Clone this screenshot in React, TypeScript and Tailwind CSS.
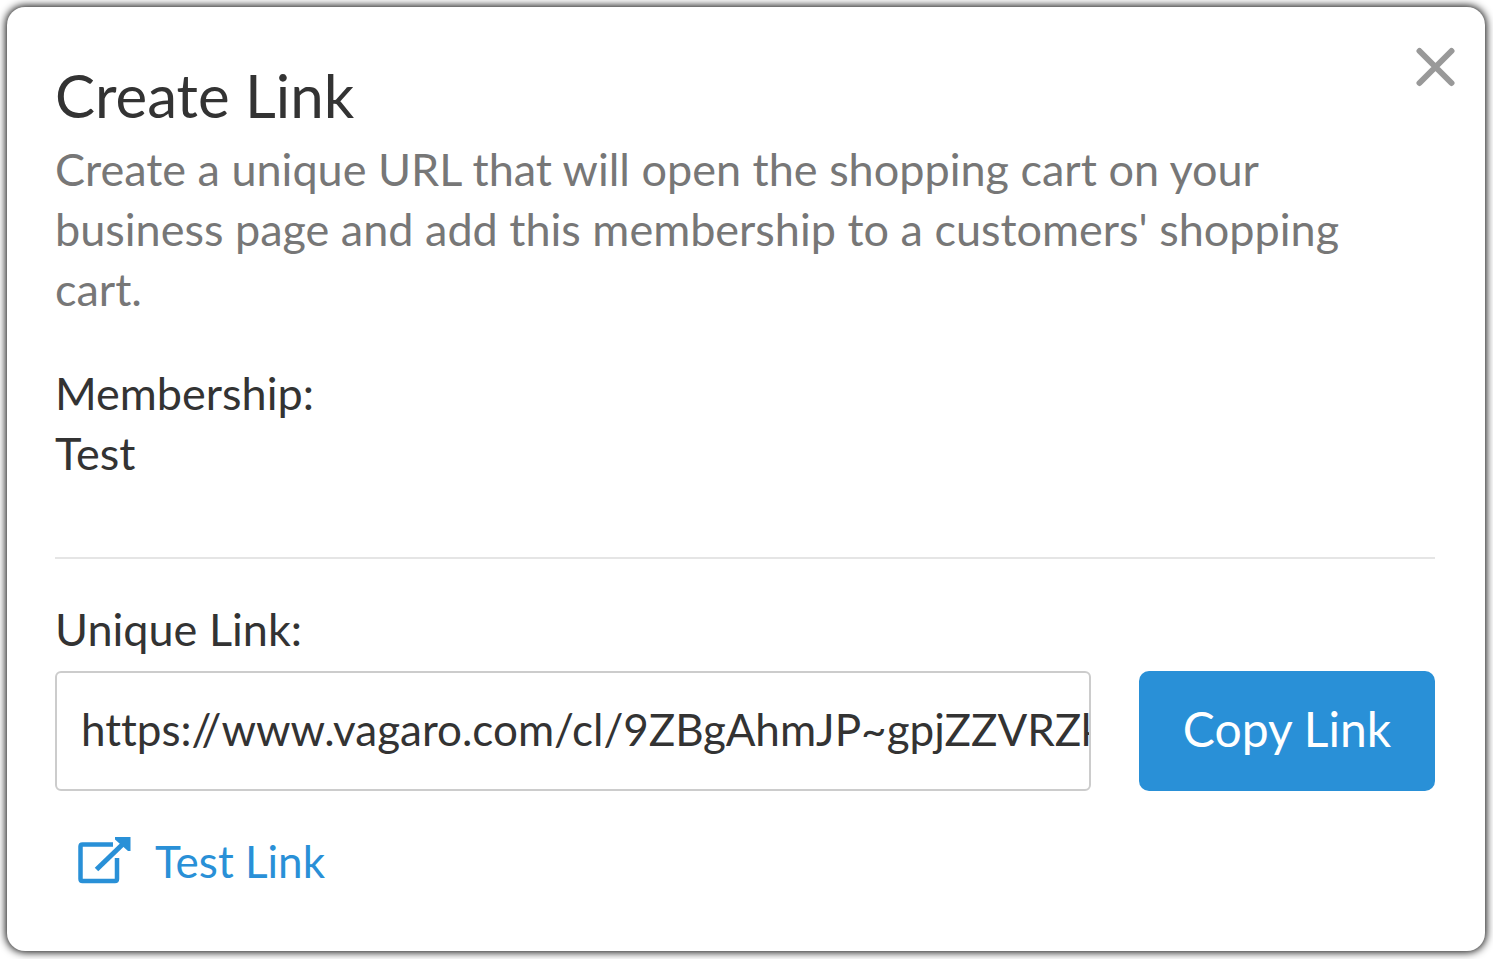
import { useState } from "react";

const LINK = "https://www.vagaro.com/cl/9ZBgAhmJP~gpjZZVRZkT2mQx8LwBn";

function CloseIcon() {
  return (
    <svg viewBox="0 0 40 40" className="size-10" fill="none" stroke="#999999" strokeWidth="6" strokeLinecap="round" aria-hidden="true">
      <path d="M4.500 4 36.500 36M36.500 4 4.500 36" />
    </svg>
  );
}

function OpenIcon() {
  return (
    <svg viewBox="0 0 54 48" className="h-12 w-[54px]" fill="none" stroke="#2990d7" strokeWidth="4.500" aria-hidden="true">
      <path d="M36 7.500H5.500q-2 0-2 2V42q0 2 2 2H38q2 0 2-2V21" />
      <path d="M19.500 32.500 47 6" strokeWidth="5" />
      <path d="M38 0H53.500V14H51L38 2.500Z" fill="#2990d7" stroke="none" />
    </svg>
  );
}

export default function App() {
  const [open, setOpen] = useState(true);
  const [link, setLink] = useState(LINK);

  if (!open) return null;

  return (
    <main className="flex min-h-screen flex-col bg-white p-[7px] pb-2 font-['Lato','Liberation_Sans',sans-serif] text-[45px] leading-[60px] text-[#333333] [font-variant-ligatures:none]">
      <section
        role="dialog"
        aria-labelledby="dialog-title"
        className="relative mr-px grow rounded-[18px] bg-white pb-12 pl-12 pr-[50px] pt-[52px] shadow-[0_0_9px_1px_#000000]"
      >
        <button
          type="button"
          aria-label="Close"
          onClick={() => setOpen(false)}
          className="absolute right-[30px] top-10 cursor-pointer"
        >
          <CloseIcon />
        </button>

        <h1 id="dialog-title" className="text-[60px] leading-[72px]">Create Link</h1>
        <p className="mt-2 pr-10 text-[#777777]">
          Create a unique URL that will open the shopping cart on your business page and add this membership to a
          customers' shopping cart.
        </p>

        <dl className="mt-11">
          <dt>Membership:</dt>
          <dd>Test</dd>
        </dl>

        <hr className="mt-[74px] border-t-2 border-[#e5e5e5]" />

        <label htmlFor="unique-link" className="mt-10 block">Unique Link:</label>
        <div className="mt-3 flex gap-12">
          <input
            id="unique-link"
            type="text"
            value={link}
            onChange={(e) => setLink(e.target.value)}
            className="h-[120px] min-w-0 grow rounded-md border-2 border-[#cccccc] bg-white pb-1 pl-6 text-[44px] outline-none"
          />
          <button
            type="button"
            onClick={() => navigator.clipboard?.writeText(link)}
            className="h-[120px] w-[296px] shrink-0 cursor-pointer rounded-[10px] bg-[#2990d7] pb-1 text-[48px] text-white"
          >
            Copy Link
          </button>
        </div>

        <a href={link} className="ml-[22px] mt-10 inline-flex items-center gap-6 text-[44px] text-[#2990d7]">
          <OpenIcon />
          Test Link
        </a>
      </section>
    </main>
  );
}
